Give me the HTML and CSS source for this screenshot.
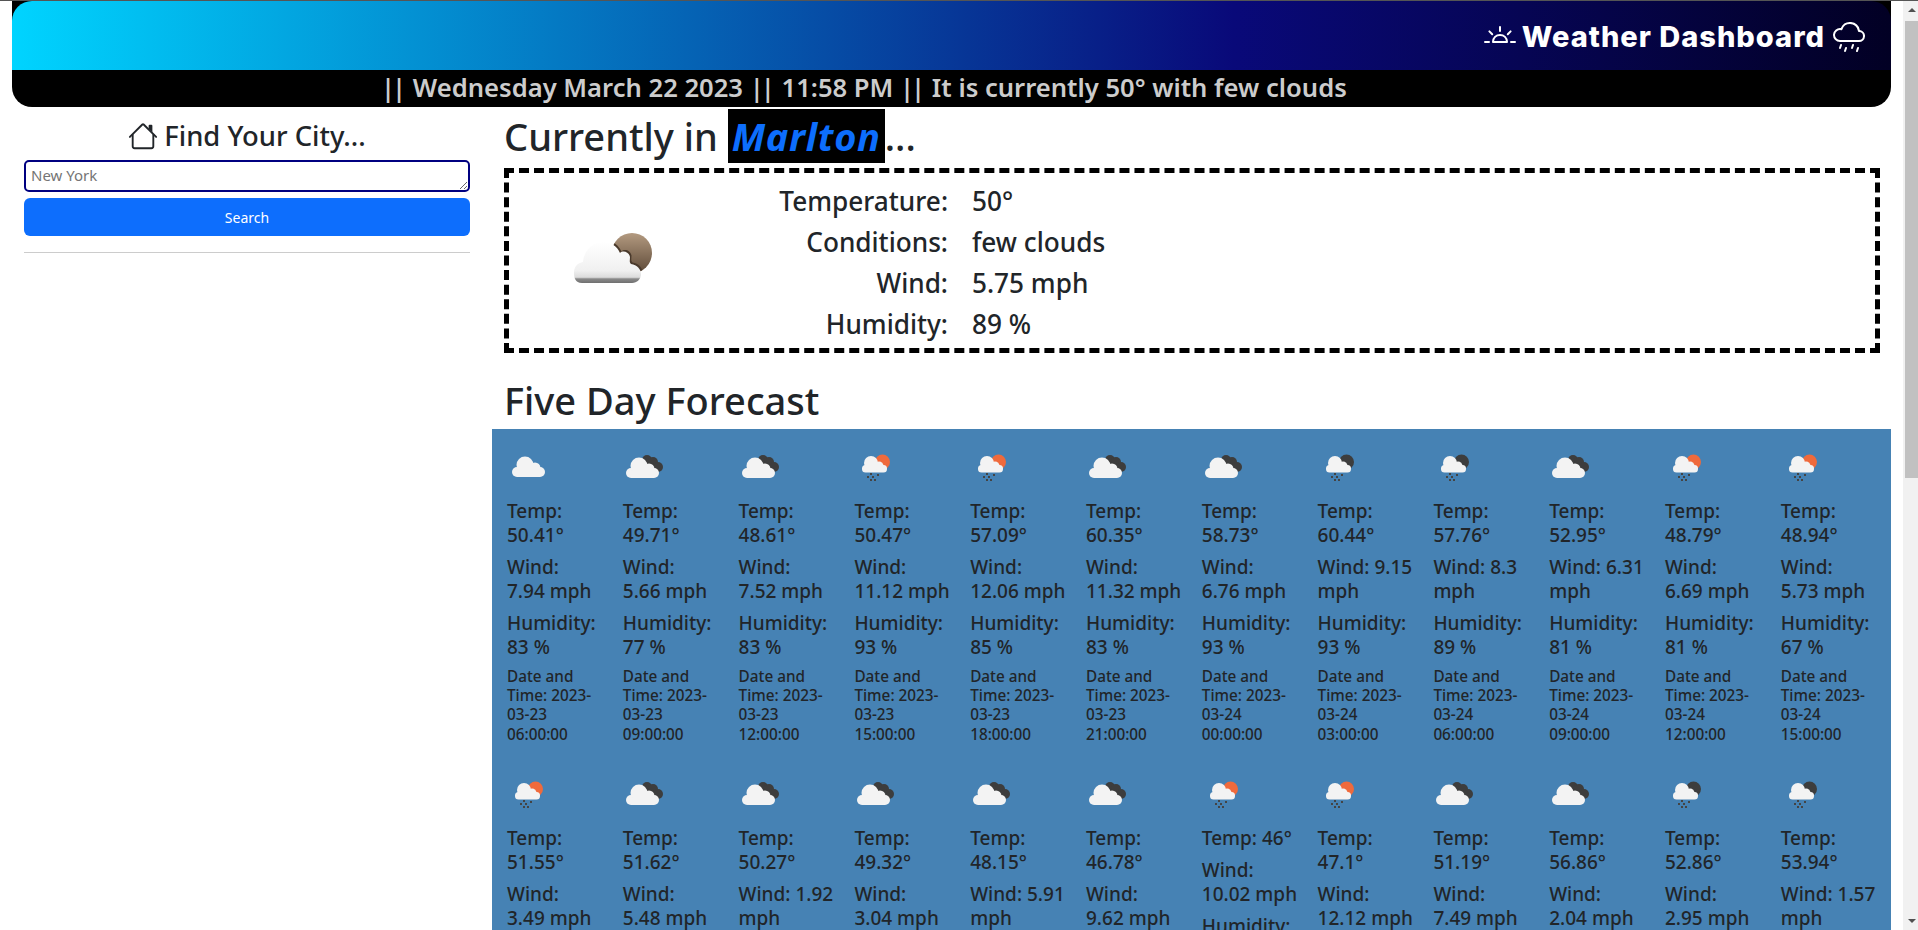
FILE: index.html
```html
<!DOCTYPE html>
<html lang="en">
<head>
  <meta charset="UTF-8" />
  <title>Weather Dashboard</title>
  <link rel="stylesheet" href="styles.css">
</head>
<body>
  <svg class="defs" width="0" height="0" aria-hidden="true">
    <defs>
      <g id="white-cloud">
        <rect x="3" y="27" width="33" height="10" rx="5" />
        <circle cx="16" cy="25" r="8.5" />
        <circle cx="26" cy="28" r="5.5" />
      </g>
      <g id="rain-cloud">
        <rect x="8" y="24" width="25" height="7.5" rx="3.5" fill="#f3f3f3" />
        <circle cx="17" cy="22" r="7" fill="#f3f3f3" />
        <circle cx="25" cy="25" r="4.5" fill="#f3f3f3" />
        <g fill="#444">
          <rect x="16" y="32" width="2" height="2" />
          <rect x="13" y="35" width="2" height="2" />
          <rect x="18" y="35" width="2" height="2" />
          <rect x="23" y="33" width="2" height="2" />
          <rect x="16" y="38" width="2" height="2" />
          <rect x="20" y="38" width="2" height="2" />
        </g>
      </g>
      <symbol id="icon-cloud" viewBox="0 0 50 50">
        <use href="#white-cloud" x="2" y="-1" fill="#f3f3f3" />
      </symbol>
      <symbol id="icon-broken" viewBox="0 0 50 50">
        <g fill="#3d3d3d">
          <circle cx="24" cy="19" r="5" />
          <circle cx="30" cy="21" r="5" />
          <circle cx="35" cy="26" r="5" />
        </g>
        <use href="#white-cloud" fill="#f3f3f3" />
      </symbol>
      <symbol id="icon-rain-day" viewBox="0 0 50 50">
        <circle cx="28.5" cy="21" r="7.5" fill="#ef6a3c" />
        <use href="#rain-cloud" />
      </symbol>
      <symbol id="icon-rain-night" viewBox="0 0 50 50">
        <circle cx="28.5" cy="21" r="7.5" fill="#3d3d3d" />
        <use href="#rain-cloud" />
      </symbol>
      <linearGradient id="moon-fill" x1="0" y1="0" x2="0" y2="1">
        <stop offset="0" stop-color="#b39a80" />
        <stop offset="1" stop-color="#5e4a38" />
      </linearGradient>
      <linearGradient id="cloud-fill" x1="0" y1="0" x2="0" y2="1">
        <stop offset="0" stop-color="#ffffff" />
        <stop offset="0.7" stop-color="#f0f0f0" />
        <stop offset="0.86" stop-color="#dcdcdc" />
        <stop offset="0.9" stop-color="#8a8a8a" />
        <stop offset="1" stop-color="#6f6f6f" />
      </linearGradient>
      <clipPath id="moon-clip">
        <circle cx="72" cy="42" r="20" />
      </clipPath>
      <path id="big-cloud" d="M22 72C15 72 14 66 14 62C14 55 18 52 23 51C24 40 32 31 43 31C51 31 57 35 60 42C63 39 69 41 70 46C70 49 69 51 71 53C77 54 81 58 81 63C81 68 77 72 72 72Z" />
    </defs>
  </svg>

  <div class="page">
    <header class="site-header">
      <div class="title-bar">
        <svg class="bi bi-sun" viewBox="0 0 16 16" fill="currentColor"><path d="M8 3a.5.5 0 0 1 .5.5v2a.5.5 0 0 1-1 0v-2A.5.5 0 0 1 8 3zm8 8a.5.5 0 0 1-.5.5h-2a.5.5 0 0 1 0-1h2a.5.5 0 0 1 .5.5zm-13.5.5a.5.5 0 0 0 0-1h-2a.5.5 0 0 0 0 1h2zm11.157-6.157a.5.5 0 0 1 0 .707l-1.414 1.414a.5.5 0 1 1-.707-.707l1.414-1.414a.5.5 0 0 1 .707 0zm-9.9 2.121a.5.5 0 0 0 .707-.707L3.05 5.343a.5.5 0 1 0-.707.707l1.414 1.414zM8 7a4 4 0 0 0-4 4 .5.5 0 0 0 .5.5h7a.5.5 0 0 0 .5-.5 4 4 0 0 0-4-4zm0 1a3 3 0 0 1 2.959 2.5H5.04A3 3 0 0 1 8 8z"/></svg>
        <h1>Weather Dashboard</h1>
        <svg class="bi bi-rain" viewBox="0 0 16 16" fill="currentColor"><path d="M4.158 12.025a.5.5 0 0 1 .316.633l-.5 1.5a.5.5 0 0 1-.948-.316l.5-1.5a.5.5 0 0 1 .632-.317zm6 0a.5.5 0 0 1 .316.633l-.5 1.5a.5.5 0 0 1-.948-.316l.5-1.5a.5.5 0 0 1 .632-.317zm-3.5 1.5a.5.5 0 0 1 .316.633l-.5 1.5a.5.5 0 0 1-.948-.316l.5-1.5a.5.5 0 0 1 .632-.317zm6 0a.5.5 0 0 1 .316.633l-.5 1.5a.5.5 0 1 1-.948-.316l.5-1.5a.5.5 0 0 1 .632-.317zm.747-8.498a5.001 5.001 0 0 0-9.499-1.004A3.5 3.5 0 1 0 3.5 11H13a3 3 0 0 0 .405-5.973zM8.5 2a4 4 0 0 1 3.976 3.555.5.5 0 0 0 .5.445H13a2 2 0 0 1 0 4H3.5a2.5 2.5 0 1 1 .605-4.926.5.5 0 0 0 .596-.329A4.002 4.002 0 0 1 8.5 2z"/></svg>
      </div>
      <div class="status-bar"><span class="pipes">||</span> Wednesday March 22 2023 <span class="pipes">||</span> 11:58 PM <span class="pipes">||</span> It is currently 50° with few clouds</div>
    </header>

    <div class="columns">
      <aside class="sidebar">
        <h3 class="find-title">
          <svg class="bi bi-house" viewBox="0 0 16 16" fill="currentColor"><path fill-rule="evenodd" d="M2 13.5V7h1v6.5a.5.5 0 0 0 .5.5h9a.5.5 0 0 0 .5-.5V7h1v6.5a1.5 1.5 0 0 1-1.5 1.5h-9A1.5 1.5 0 0 1 2 13.5zm11-11V6l-2-2V2.5a.5.5 0 0 1 .5-.5h1a.5.5 0 0 1 .5.5z"/><path fill-rule="evenodd" d="M7.293 1.5a1 1 0 0 1 1.414 0l6.647 6.646a.5.5 0 0 1-.708.708L8 2.207 1.354 8.854a.5.5 0 1 1-.708-.708L7.293 1.5z"/></svg>
          Find Your City...
        </h3>
        <textarea class="city-input" rows="1" placeholder="New York"></textarea>
        <button class="search-btn">Search</button>
        <hr class="divider" />
      </aside>

      <main class="content">
        <h2 class="section-title">Currently in <span class="city-name">Marlton</span>...</h2>
        <section class="current">
          <div class="current-icon">
            <svg width="100" height="100" viewBox="0 0 100 100">
              <circle cx="72" cy="42" r="20" fill="url(#moon-fill)" />
              <g clip-path="url(#moon-clip)">
                <use href="#big-cloud" x="1.5" y="-1.5" fill="#4a3a2c" />
              </g>
              <use href="#big-cloud" fill="url(#cloud-fill)" />
            </svg>
          </div>
          <dl class="current-stats">
            <dt>Temperature:</dt><dd>50°</dd>
            <dt>Conditions:</dt><dd>few clouds</dd>
            <dt>Wind:</dt><dd>5.75 mph</dd>
            <dt>Humidity:</dt><dd>89 %</dd>
          </dl>
        </section>

        <h2 class="section-title forecast-title">Five Day Forecast</h2>
        <section class="forecast">
          <article class="card"><svg class="card-icon"><use href="#icon-cloud" /></svg><p>Temp:<br>50.41°</p><p>Wind:<br>7.94 mph</p><p>Humidity:<br>83 %</p><h6>Date and<br>Time: 2023-<br>03-23<br>06:00:00</h6></article>
          <article class="card"><svg class="card-icon"><use href="#icon-broken" /></svg><p>Temp:<br>49.71°</p><p>Wind:<br>5.66 mph</p><p>Humidity:<br>77 %</p><h6>Date and<br>Time: 2023-<br>03-23<br>09:00:00</h6></article>
          <article class="card"><svg class="card-icon"><use href="#icon-broken" /></svg><p>Temp:<br>48.61°</p><p>Wind:<br>7.52 mph</p><p>Humidity:<br>83 %</p><h6>Date and<br>Time: 2023-<br>03-23<br>12:00:00</h6></article>
          <article class="card"><svg class="card-icon"><use href="#icon-rain-day" /></svg><p>Temp:<br>50.47°</p><p>Wind:<br>11.12 mph</p><p>Humidity:<br>93 %</p><h6>Date and<br>Time: 2023-<br>03-23<br>15:00:00</h6></article>
          <article class="card"><svg class="card-icon"><use href="#icon-rain-day" /></svg><p>Temp:<br>57.09°</p><p>Wind:<br>12.06 mph</p><p>Humidity:<br>85 %</p><h6>Date and<br>Time: 2023-<br>03-23<br>18:00:00</h6></article>
          <article class="card"><svg class="card-icon"><use href="#icon-broken" /></svg><p>Temp:<br>60.35°</p><p>Wind:<br>11.32 mph</p><p>Humidity:<br>83 %</p><h6>Date and<br>Time: 2023-<br>03-23<br>21:00:00</h6></article>
          <article class="card"><svg class="card-icon"><use href="#icon-broken" /></svg><p>Temp:<br>58.73°</p><p>Wind:<br>6.76 mph</p><p>Humidity:<br>93 %</p><h6>Date and<br>Time: 2023-<br>03-24<br>00:00:00</h6></article>
          <article class="card"><svg class="card-icon"><use href="#icon-rain-night" /></svg><p>Temp:<br>60.44°</p><p>Wind: 9.15<br>mph</p><p>Humidity:<br>93 %</p><h6>Date and<br>Time: 2023-<br>03-24<br>03:00:00</h6></article>
          <article class="card"><svg class="card-icon"><use href="#icon-rain-night" /></svg><p>Temp:<br>57.76°</p><p>Wind: 8.3<br>mph</p><p>Humidity:<br>89 %</p><h6>Date and<br>Time: 2023-<br>03-24<br>06:00:00</h6></article>
          <article class="card"><svg class="card-icon"><use href="#icon-broken" /></svg><p>Temp:<br>52.95°</p><p>Wind: 6.31<br>mph</p><p>Humidity:<br>81 %</p><h6>Date and<br>Time: 2023-<br>03-24<br>09:00:00</h6></article>
          <article class="card"><svg class="card-icon"><use href="#icon-rain-day" /></svg><p>Temp:<br>48.79°</p><p>Wind:<br>6.69 mph</p><p>Humidity:<br>81 %</p><h6>Date and<br>Time: 2023-<br>03-24<br>12:00:00</h6></article>
          <article class="card"><svg class="card-icon"><use href="#icon-rain-day" /></svg><p>Temp:<br>48.94°</p><p>Wind:<br>5.73 mph</p><p>Humidity:<br>67 %</p><h6>Date and<br>Time: 2023-<br>03-24<br>15:00:00</h6></article>

          <article class="card"><svg class="card-icon"><use href="#icon-rain-day" /></svg><p>Temp:<br>51.55°</p><p>Wind:<br>3.49 mph</p></article>
          <article class="card"><svg class="card-icon"><use href="#icon-broken" /></svg><p>Temp:<br>51.62°</p><p>Wind:<br>5.48 mph</p></article>
          <article class="card"><svg class="card-icon"><use href="#icon-broken" /></svg><p>Temp:<br>50.27°</p><p>Wind: 1.92<br>mph</p></article>
          <article class="card"><svg class="card-icon"><use href="#icon-broken" /></svg><p>Temp:<br>49.32°</p><p>Wind:<br>3.04 mph</p></article>
          <article class="card"><svg class="card-icon"><use href="#icon-broken" /></svg><p>Temp:<br>48.15°</p><p>Wind: 5.91<br>mph</p></article>
          <article class="card"><svg class="card-icon"><use href="#icon-broken" /></svg><p>Temp:<br>46.78°</p><p>Wind:<br>9.62 mph</p></article>
          <article class="card"><svg class="card-icon"><use href="#icon-rain-day" /></svg><p>Temp: 46°</p><p>Wind:<br>10.02 mph</p><p>Humidity:</p></article>
          <article class="card"><svg class="card-icon"><use href="#icon-rain-day" /></svg><p>Temp:<br>47.1°</p><p>Wind:<br>12.12 mph</p></article>
          <article class="card"><svg class="card-icon"><use href="#icon-broken" /></svg><p>Temp:<br>51.19°</p><p>Wind:<br>7.49 mph</p></article>
          <article class="card"><svg class="card-icon"><use href="#icon-broken" /></svg><p>Temp:<br>56.86°</p><p>Wind:<br>2.04 mph</p></article>
          <article class="card"><svg class="card-icon"><use href="#icon-rain-night" /></svg><p>Temp:<br>52.86°</p><p>Wind:<br>2.95 mph</p></article>
          <article class="card"><svg class="card-icon"><use href="#icon-rain-night" /></svg><p>Temp:<br>53.94°</p><p>Wind: 1.57<br>mph</p></article>
        </section>
      </main>
    </div>
  </div>

  <div class="scrollbar">
    <span class="arrow-up"></span>
    <span class="thumb"></span>
    <span class="track-fill"></span>
    <span class="arrow-down"></span>
  </div>
</body>
</html>
```

FILE: styles.css
```css
* {
  box-sizing: border-box;
}

html, body {
  height: 100%;
}

body {
  display: flex;
  margin: 0;
  height: 100vh;
  overflow: hidden;
  border-top: 1px solid #555;
  background: #fff;
  color: #212529;
  font-family: "Noto Sans", sans-serif;
  font-size: 16px;
  line-height: 1.5;
}

.defs {
  position: absolute;
}

.page {
  flex: 1;
  min-width: 0;
  padding: 0 12px;
  overflow: hidden;
}

/* header */
.site-header {
  border-radius: 0 0 20px 20px;
  overflow: hidden;
  background: #000;
}

.title-bar {
  display: flex;
  align-items: center;
  justify-content: flex-end;
  height: 69px;
  padding-right: 26px;
  border-radius: 20px 20px 0 0;
  background: linear-gradient(90deg, #00d4ff 0%, #090979 65%, #020024 100%);
  color: #fff;
}

.title-bar h1 {
  margin: 3px 8px 0 6px;
  font-family: Inter, sans-serif;
  font-size: 29px;
  font-weight: 800;
  letter-spacing: 1px;
  line-height: 1.2;
}

.bi {
  display: block;
}

.bi-sun,
.bi-rain {
  width: 32px;
  height: 32px;
}

.status-bar {
  height: 37px;
  padding-left: 369px;
  color: #ccc;
  font-size: 25.6px;
  font-weight: 600;
  line-height: 36px;
  white-space: nowrap;
}

.pipes {
  letter-spacing: -3px;
  margin-right: 3px;
}

/* page columns */
.columns {
  display: flex;
}

.sidebar {
  flex: 0 0 480px;
  padding: 12px 22px 0 12px;
}

.find-title {
  display: flex;
  align-items: center;
  justify-content: center;
  gap: 6px;
  margin: 0 0 7px;
  font-size: 27.4px;
  font-weight: 500;
  line-height: 34px;
}

.bi-house {
  width: 30px;
  height: 30px;
}

.city-input {
  display: block;
  width: 100%;
  height: 32px;
  padding: 3px 5px 0;
  border: 2px solid #000080;
  border-radius: 5px;
  color: #212529;
  font-family: "Noto Sans", sans-serif;
  font-size: 15px;
  outline: none;
}

.search-btn {
  display: block;
  width: 100%;
  height: 38px;
  margin-top: 6px;
  border: none;
  border-radius: 6px;
  background: #0d6efd;
  color: #fff;
  font-family: "Noto Sans", sans-serif;
  font-size: 14px;
  cursor: pointer;
}

.divider {
  margin: 16px 0 0;
  border: 0;
  border-top: 1px solid #ccc;
}

.content {
  flex: 1;
  min-width: 0;
}

.section-title {
  margin: 0;
  padding-left: 12px;
  font-size: 38px;
  font-weight: 500;
  line-height: 54px;
}

.content > .section-title:first-child {
  margin-top: 2px;
}

.city-name {
  display: inline-block;
  padding: 0 4px;
  background: #000;
  color: #0d6efd;
  font-style: italic;
  font-weight: 700;
  letter-spacing: 0.7px;
}

.current {
  display: flex;
  align-items: center;
  height: 185px;
  margin: 5px 11px 0 12px;
  border: 5px dashed #000;
}

.current-icon {
  flex: 0 0 149px;
  padding-left: 51px;
}

.current-icon svg {
  display: block;
}

.current-stats {
  display: grid;
  grid-template-columns: 288px 1fr;
  grid-auto-rows: 41px;
  column-gap: 24px;
  margin: 17px 0 0;
  font-size: 26.2px;
  font-weight: 500;
  line-height: 29px;
}

.current-stats dt {
  text-align: right;
}

.current-stats dd {
  margin: 0;
}

.forecast-title {
  margin: 20px 0 2px;
}

/* forecast grid */
.forecast {
  display: grid;
  grid-template-columns: repeat(12, 115.8px);
  padding-left: 3px;
  background: #4682b4;
}

.card {
  padding: 12px;
  white-space: nowrap;
}

.card-icon {
  display: block;
  width: 50px;
  height: 50px;
  margin-bottom: 8px;
}

.card p {
  margin: 0 0 8px;
  font-size: 19px;
  font-weight: 500;
  line-height: 24px;
}

.card h6 {
  margin: 0;
  font-size: 15.3px;
  font-weight: 500;
  line-height: 19.2px;
}

/* drawn scrollbar, the page below the fold is cut off */
.scrollbar {
  display: flex;
  flex: 0 0 15px;
  flex-direction: column;
  align-items: stretch;
  background: #f1f1f1;
  padding-left: 2px;
}

.arrow-up,
.arrow-down {
  flex: 0 0 20px;
  position: relative;
}

.arrow-up::after,
.arrow-down::after {
  content: "";
  position: absolute;
  left: 3px;
  width: 0;
  height: 0;
  border-left: 4px solid transparent;
  border-right: 4px solid transparent;
}

.arrow-up::after {
  top: 7px;
  border-bottom: 4px solid #505050;
}

.arrow-down::after {
  bottom: 7px;
  border-top: 4px solid #505050;
}

.thumb {
  flex: 0 0 457px;
  background: #c1c1c1;
}

.track-fill {
  flex: 1;
}
```
